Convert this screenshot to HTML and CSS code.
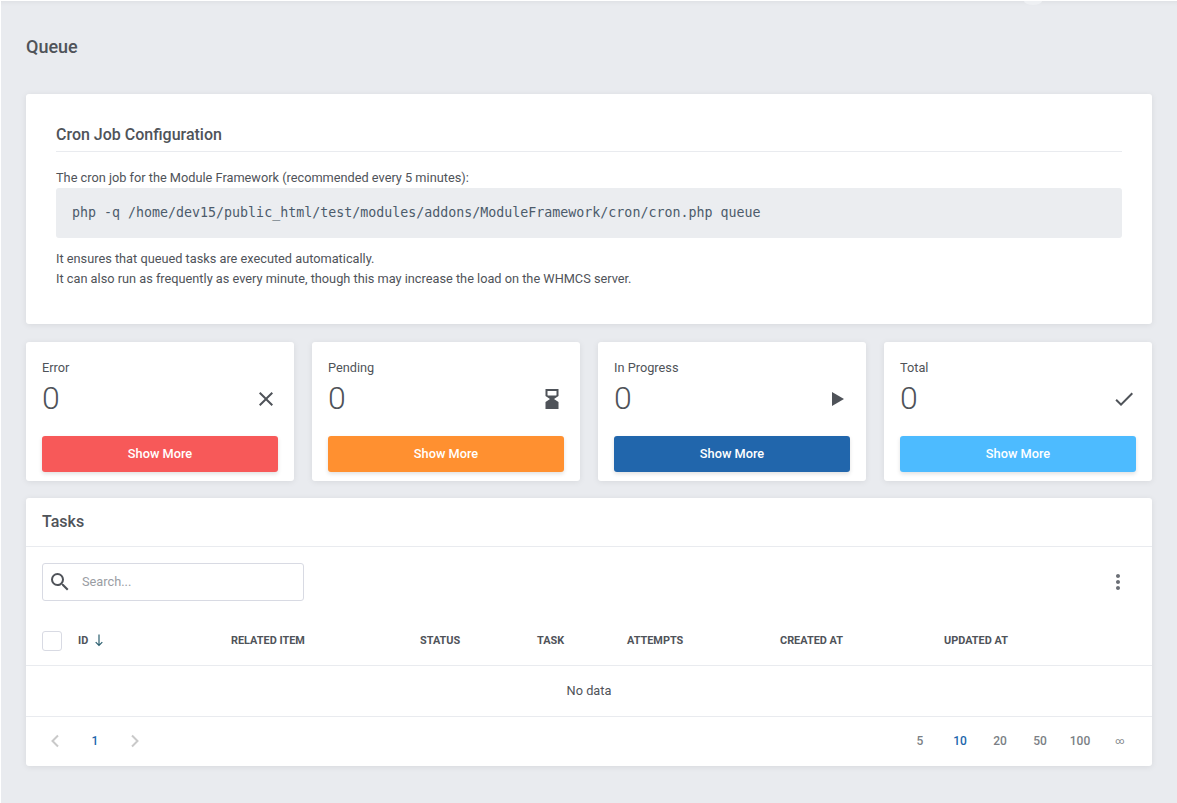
FILE: index.html
```html
<!DOCTYPE html>
<html lang="en">
<head>
    <meta charset="UTF-8">
    <meta name="viewport" content="width=device-width, initial-scale=1.0">
    <title>Queue</title>
    <link rel="stylesheet" href="styles.css">
</head>
<body>
    <div class="page">
        <span class="top-notch"></span>
        <h1 class="page-title">Queue</h1>

        <div class="card cron-card">
            <h2>Cron Job Configuration</h2>
            <p class="cron-intro">The cron job for the Module Framework (recommended every 5 minutes):</p>
            <pre class="cron-command">php -q /home/dev15/public_html/test/modules/addons/ModuleFramework/cron/cron.php queue</pre>
            <p class="cron-note">It ensures that queued tasks are executed automatically.<br>It can also run as frequently as every minute, though this may increase the load on the WHMCS server.</p>
        </div>

        <div class="stats">
            <div class="card stat">
                <div class="stat-label">Error</div>
                <div class="stat-row">
                    <span class="stat-value">0</span>
                    <svg class="stat-icon" viewBox="0 0 24 24"><path d="M19 6.41L17.59 5 12 10.59 6.41 5 5 6.41 10.59 12 5 17.59 6.41 19 12 13.41 17.59 19 19 17.59 13.41 12z"/></svg>
                </div>
                <button class="btn btn-error">Show More</button>
            </div>
            <div class="card stat">
                <div class="stat-label">Pending</div>
                <div class="stat-row">
                    <span class="stat-value">0</span>
                    <svg class="stat-icon" viewBox="0 0 24 24"><path fill-rule="evenodd" d="M5.500 2h13v7L14 12l4.500 3v7h-13v-7L10 12 5.500 9V2zm2 2v4.200l.5.300h8l.5-.3V4h-9z"/></svg>
                </div>
                <button class="btn btn-pending">Show More</button>
            </div>
            <div class="card stat">
                <div class="stat-label">In Progress</div>
                <div class="stat-row">
                    <span class="stat-value">0</span>
                    <svg class="stat-icon" viewBox="0 0 24 24"><path d="M6 5v14l12-7z"/></svg>
                </div>
                <button class="btn btn-progress">Show More</button>
            </div>
            <div class="card stat">
                <div class="stat-label">Total</div>
                <div class="stat-row">
                    <span class="stat-value">0</span>
                    <svg class="stat-icon" viewBox="0 0 24 24"><path d="M9 16.170L4.830 12l-1.420 1.410L9 19 21 7l-1.410-1.410z"/></svg>
                </div>
                <button class="btn btn-total">Show More</button>
            </div>
        </div>

        <div class="card tasks">
            <div class="tasks-header">Tasks</div>
            <div class="tasks-toolbar">
                <div class="search">
                    <svg class="search-icon" viewBox="0 0 24 24"><path d="M15.500 14h-.79l-.28-.27A6.470 6.470 0 0 0 16 9.500 6.500 6.500 0 1 0 9.500 16c1.610 0 3.090-.59 4.230-1.570l.27.28v.79l5 4.990L20.490 19l-4.990-5zm-6 0C7.010 14 5 11.990 5 9.500S7.010 5 9.500 5 14 7.010 14 9.500 11.990 14 9.500 14z"/></svg>
                    <input type="text" placeholder="Search...">
                </div>
                <svg class="more-icon" viewBox="0 0 24 24"><path d="M12 8c1.100 0 2-.9 2-2s-.9-2-2-2-2 .9-2 2 .9 2 2 2zm0 2c-1.100 0-2 .9-2 2s.9 2 2 2 2-.9 2-2-.9-2-2-2zm0 6c-1.100 0-2 .9-2 2s.9 2 2 2 2-.9 2-2-.9-2-2-2z"/></svg>
            </div>
            <table class="tasks-table">
                <colgroup>
                    <col class="col-check"><col class="col-id"><col class="col-item"><col class="col-status"><col class="col-task"><col class="col-attempts"><col class="col-created"><col>
                </colgroup>
                <thead>
                    <tr>
                        <th class="check-cell"><span class="checkbox"></span></th>
                        <th>ID <svg class="sort-icon" viewBox="0 0 12 14"><path d="M6 1.500v11M2.700 9.200 6 12.500l3.300-3.300"/></svg></th>
                        <th>Related Item</th>
                        <th>Status</th>
                        <th>Task</th>
                        <th>Attempts</th>
                        <th>Created At</th>
                        <th>Updated At</th>
                    </tr>
                </thead>
                <tbody>
                    <tr><td colspan="8" class="no-data">No data</td></tr>
                </tbody>
            </table>
            <div class="pager">
                <div class="pages">
                    <svg class="pager-arrow" viewBox="0 0 10 14"><path d="M8 1.500 2.500 7 8 12.500"/></svg>
                    <span class="page-num active">1</span>
                    <svg class="pager-arrow" viewBox="0 0 10 14"><path d="M2 1.500 7.500 7 2 12.500"/></svg>
                </div>
                <div class="sizes">
                    <span>5</span>
                    <span class="active">10</span>
                    <span>20</span>
                    <span>50</span>
                    <span>100</span>
                    <span class="size-all">∞</span>
                </div>
            </div>
        </div>
    </div>
</body>
</html>
```

FILE: styles.css
```css
* {
    box-sizing: border-box;
}

html, body {
    height: 100%;
}

body {
    margin: 0;
    background: #fff;
    font-family: Roboto, "Liberation Sans", sans-serif;
    font-size: 12.75px;
    line-height: 20px;
    color: #4f5359;
}

.page {
    position: relative;
    margin: 1px 0 0 1px;
    height: 802px;
    padding: 0 25px;
    background: #e9ebef;
    box-shadow: inset 0 6px 6px -6px rgba(0, 0, 0, 0.08);
    overflow: hidden;
}

.top-notch {
    position: absolute;
    top: -4px;
    left: 1023px;
    width: 18px;
    height: 8px;
    border-radius: 50%;
    background: #eef0f3;
}

.page-title {
    margin: 0;
    padding-top: 36px;
    height: 93px;
    font-size: 18px;
    line-height: 20px;
    font-weight: 500;
}

.card {
    background: #fff;
    border-radius: 3px;
    box-shadow: 0 1px 6px rgba(0, 0, 0, 0.08);
}

.cron-card {
    height: 230px;
    padding: 31px 30px 0;
}

.cron-card h2 {
    margin: 0;
    height: 27px;
    font-size: 16px;
    line-height: 20px;
    font-weight: 500;
    border-bottom: 1px solid #e9ebef;
}

.cron-card p {
    margin: 0;
}

.cron-card .cron-intro {
    margin-top: 16px;
    height: 20px;
}

.cron-command {
    margin: 0;
    height: 50px;
    padding: 15px 16px;
    background: #ebedf0;
    border-radius: 3px;
    font-family: "DejaVu Sans Mono", monospace;
    font-size: 13.3px;
    line-height: 20px;
    color: #4c5b6b;
}

.cron-card .cron-note {
    margin-top: 11px;
}

.stats {
    display: grid;
    grid-template-columns: repeat(4, 1fr);
    gap: 18px;
    margin-top: 18px;
}

.stat {
    height: 139px;
    padding: 16px;
}

.stat-label {
    height: 20px;
}

.stat-row {
    display: flex;
    justify-content: space-between;
    align-items: center;
    height: 40px;
    margin-top: 1px;
}

.stat-value {
    margin-top: -2px;
    font-size: 32px;
    line-height: 40px;
    font-weight: 300;
}

.stat-icon {
    width: 24px;
    height: 24px;
    fill: #4f5359;
}

.btn {
    display: block;
    width: 100%;
    height: 36px;
    margin-top: 17px;
    padding: 0 0 2px;
    border: none;
    border-radius: 3px;
    font-family: inherit;
    font-size: 12.75px;
    font-weight: 500;
    color: #fff;
    box-shadow: 0 2px 4px rgba(0, 0, 0, 0.12);
}

.btn-error { background: #f75959; }
.btn-pending { background: #ff9030; }
.btn-progress { background: #2166ac; }
.btn-total { background: #4dbbff; }

.tasks {
    height: 268px;
    margin-top: 17px;
}

.tasks-header {
    height: 49px;
    padding: 14px 16px;
    font-size: 16px;
    line-height: 20px;
    font-weight: 500;
    border-bottom: 1px solid #e9ebef;
}

.tasks-toolbar {
    display: flex;
    justify-content: space-between;
    align-items: center;
    padding: 16px 22px 0 16px;
}

.search {
    display: flex;
    align-items: center;
    width: 262px;
    height: 38px;
    padding: 0 5px;
    border: 1px solid #d8dae3;
    border-radius: 3px;
}

.search-icon {
    flex: none;
    width: 24px;
    height: 24px;
    fill: #4f5359;
}

.search input {
    flex: 1;
    min-width: 0;
    margin-left: 10px;
    padding: 0 0 2px;
    border: none;
    outline: none;
    font-family: inherit;
    font-size: 12.75px;
    color: #4f5359;
}

.search input::placeholder {
    color: #9a9da3;
}

.more-icon {
    width: 24px;
    height: 24px;
    fill: #6b6f76;
}

.tasks-table {
    width: 100%;
    margin-top: 20px;
    table-layout: fixed;
    border-collapse: collapse;
}

.col-check { width: 52px; }
.col-id { width: 153px; }
.col-item { width: 189px; }
.col-status { width: 117px; }
.col-task { width: 90px; }
.col-attempts { width: 153px; }
.col-created { width: 164px; }

.tasks-table th {
    height: 44px;
    padding: 0 0 4px;
    text-align: left;
    font-size: 10.9px;
    font-weight: 700;
    text-transform: uppercase;
    color: #4f5359;
    border-bottom: 1px solid #e9ebef;
}

.tasks-table .check-cell {
    padding-left: 16px;
}

.checkbox {
    display: block;
    width: 20px;
    height: 20px;
    border: 1px solid #d8dae3;
    border-radius: 3px;
}

.sort-icon {
    width: 12px;
    height: 14px;
    margin-left: 2px;
    vertical-align: -3px;
    fill: none;
    stroke: #2c5f6f;
    stroke-width: 1.2;
}

.no-data {
    height: 51px;
    text-align: center;
    padding: 0;
    border-bottom: 1px solid #e9ebef;
}

.pager {
    display: flex;
    justify-content: space-between;
    align-items: center;
    height: 49px;
    padding: 0 12px 0 24px;
}

.pages {
    display: flex;
    align-items: center;
}

.pager-arrow {
    width: 10px;
    height: 14px;
    fill: none;
    stroke: #c9c9c9;
    stroke-width: 2;
}

.page-num {
    width: 70px;
    text-align: center;
    font-size: 12px;
    font-weight: 500;
}

.sizes {
    display: flex;
    font-size: 12px;
    font-weight: 500;
    color: #7b7f85;
}

.sizes span {
    width: 40px;
    text-align: center;
}

.active {
    color: #2166ac;
}

.sizes .active {
    color: #2166ac;
}

.sizes .size-all {
    font-size: 9px;
    font-weight: 400;
}
```
